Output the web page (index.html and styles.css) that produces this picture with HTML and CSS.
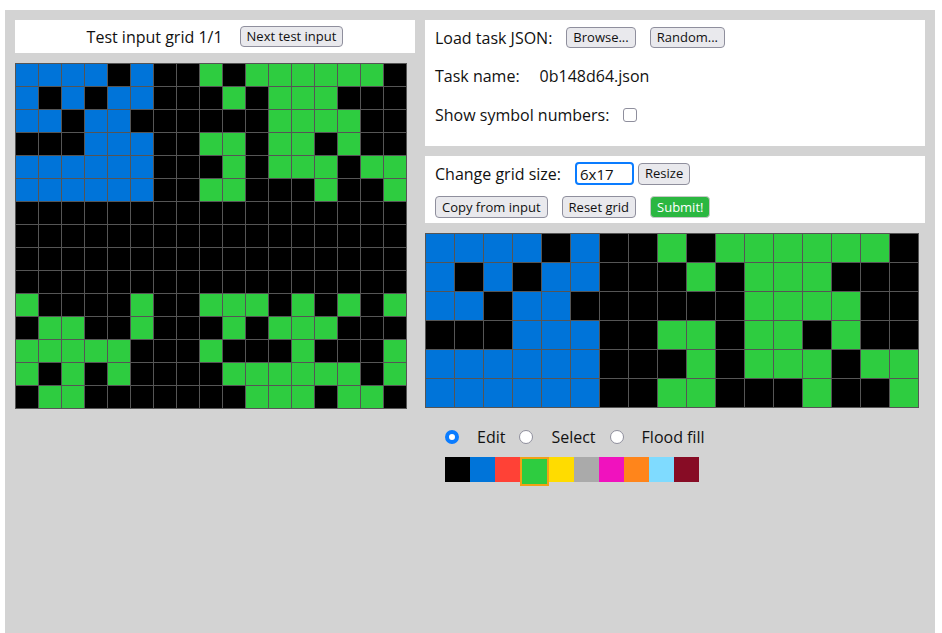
FILE: index.html
```html
<!DOCTYPE html>
<html>
<head>
<meta charset="utf-8">
<title>ARC testing interface</title>
<link rel="stylesheet" href="styles.css">
</head>
<body>
<div class="workspace">
  <div class="col-left">
    <div class="panel test-header">
      <span class="test-title">Test input grid 1/1</span>
      <button class="btn btn-next">Next test input</button>
    </div>
    <div class="grid grid-in">
      <i class="b"></i><i class="b"></i><i class="b"></i><i class="b"></i><i class="k"></i><i class="b"></i><i class="k"></i><i class="k"></i><i class="g"></i><i class="k"></i><i class="g"></i><i class="g"></i><i class="g"></i><i class="g"></i><i class="g"></i><i class="g"></i><i class="k"></i>
      <i class="b"></i><i class="k"></i><i class="b"></i><i class="k"></i><i class="b"></i><i class="b"></i><i class="k"></i><i class="k"></i><i class="k"></i><i class="g"></i><i class="k"></i><i class="g"></i><i class="g"></i><i class="g"></i><i class="k"></i><i class="k"></i><i class="k"></i>
      <i class="b"></i><i class="b"></i><i class="k"></i><i class="b"></i><i class="b"></i><i class="k"></i><i class="k"></i><i class="k"></i><i class="k"></i><i class="k"></i><i class="k"></i><i class="g"></i><i class="g"></i><i class="g"></i><i class="g"></i><i class="k"></i><i class="k"></i>
      <i class="k"></i><i class="k"></i><i class="k"></i><i class="b"></i><i class="b"></i><i class="b"></i><i class="k"></i><i class="k"></i><i class="g"></i><i class="g"></i><i class="k"></i><i class="g"></i><i class="g"></i><i class="k"></i><i class="g"></i><i class="k"></i><i class="k"></i>
      <i class="b"></i><i class="b"></i><i class="b"></i><i class="b"></i><i class="b"></i><i class="b"></i><i class="k"></i><i class="k"></i><i class="k"></i><i class="g"></i><i class="k"></i><i class="g"></i><i class="g"></i><i class="g"></i><i class="k"></i><i class="g"></i><i class="g"></i>
      <i class="b"></i><i class="b"></i><i class="b"></i><i class="b"></i><i class="b"></i><i class="b"></i><i class="k"></i><i class="k"></i><i class="g"></i><i class="g"></i><i class="k"></i><i class="k"></i><i class="k"></i><i class="g"></i><i class="k"></i><i class="k"></i><i class="g"></i>
      <i class="k"></i><i class="k"></i><i class="k"></i><i class="k"></i><i class="k"></i><i class="k"></i><i class="k"></i><i class="k"></i><i class="k"></i><i class="k"></i><i class="k"></i><i class="k"></i><i class="k"></i><i class="k"></i><i class="k"></i><i class="k"></i><i class="k"></i>
      <i class="k"></i><i class="k"></i><i class="k"></i><i class="k"></i><i class="k"></i><i class="k"></i><i class="k"></i><i class="k"></i><i class="k"></i><i class="k"></i><i class="k"></i><i class="k"></i><i class="k"></i><i class="k"></i><i class="k"></i><i class="k"></i><i class="k"></i>
      <i class="k"></i><i class="k"></i><i class="k"></i><i class="k"></i><i class="k"></i><i class="k"></i><i class="k"></i><i class="k"></i><i class="k"></i><i class="k"></i><i class="k"></i><i class="k"></i><i class="k"></i><i class="k"></i><i class="k"></i><i class="k"></i><i class="k"></i>
      <i class="k"></i><i class="k"></i><i class="k"></i><i class="k"></i><i class="k"></i><i class="k"></i><i class="k"></i><i class="k"></i><i class="k"></i><i class="k"></i><i class="k"></i><i class="k"></i><i class="k"></i><i class="k"></i><i class="k"></i><i class="k"></i><i class="k"></i>
      <i class="g"></i><i class="k"></i><i class="k"></i><i class="k"></i><i class="k"></i><i class="g"></i><i class="k"></i><i class="k"></i><i class="g"></i><i class="g"></i><i class="g"></i><i class="k"></i><i class="g"></i><i class="k"></i><i class="g"></i><i class="k"></i><i class="g"></i>
      <i class="k"></i><i class="g"></i><i class="g"></i><i class="k"></i><i class="k"></i><i class="g"></i><i class="k"></i><i class="k"></i><i class="k"></i><i class="g"></i><i class="k"></i><i class="g"></i><i class="g"></i><i class="g"></i><i class="k"></i><i class="k"></i><i class="k"></i>
      <i class="g"></i><i class="g"></i><i class="g"></i><i class="g"></i><i class="g"></i><i class="k"></i><i class="k"></i><i class="k"></i><i class="g"></i><i class="k"></i><i class="k"></i><i class="k"></i><i class="g"></i><i class="k"></i><i class="k"></i><i class="k"></i><i class="g"></i>
      <i class="g"></i><i class="k"></i><i class="g"></i><i class="k"></i><i class="g"></i><i class="k"></i><i class="k"></i><i class="k"></i><i class="k"></i><i class="g"></i><i class="g"></i><i class="g"></i><i class="g"></i><i class="g"></i><i class="g"></i><i class="k"></i><i class="g"></i>
      <i class="k"></i><i class="g"></i><i class="g"></i><i class="k"></i><i class="k"></i><i class="k"></i><i class="k"></i><i class="k"></i><i class="k"></i><i class="k"></i><i class="g"></i><i class="g"></i><i class="g"></i><i class="k"></i><i class="g"></i><i class="g"></i><i class="k"></i>
    </div>
  </div>

  <div class="col-right">
    <div class="panel load-panel">
      <div class="row row-load">
        <span class="label">Load task JSON:</span>
        <button class="btn btn-small">Browse...</button>
        <button class="btn btn-small">Random...</button>
      </div>
      <div class="row row-name">
        <span class="label">Task name:</span>
        <span class="task-name">0b148d64.json</span>
      </div>
      <div class="row row-symbols">
        <span class="label">Show symbol numbers:</span>
        <span class="checkbox"></span>
      </div>
    </div>

    <div class="panel edit-panel">
      <div class="row row-size">
        <span class="label">Change grid size:</span>
        <input class="size-input" type="text" value="6x17">
        <button class="btn btn-mid btn-resize">Resize</button>
      </div>
      <div class="row row-actions">
        <button class="btn btn-mid">Copy from input</button>
        <button class="btn btn-mid">Reset grid</button>
        <button class="btn btn-mid btn-submit">Submit!</button>
      </div>
    </div>

    <div class="grid grid-out">
      <i class="b"></i><i class="b"></i><i class="b"></i><i class="b"></i><i class="k"></i><i class="b"></i><i class="k"></i><i class="k"></i><i class="g"></i><i class="k"></i><i class="g"></i><i class="g"></i><i class="g"></i><i class="g"></i><i class="g"></i><i class="g"></i><i class="k"></i>
      <i class="b"></i><i class="k"></i><i class="b"></i><i class="k"></i><i class="b"></i><i class="b"></i><i class="k"></i><i class="k"></i><i class="k"></i><i class="g"></i><i class="k"></i><i class="g"></i><i class="g"></i><i class="g"></i><i class="k"></i><i class="k"></i><i class="k"></i>
      <i class="b"></i><i class="b"></i><i class="k"></i><i class="b"></i><i class="b"></i><i class="k"></i><i class="k"></i><i class="k"></i><i class="k"></i><i class="k"></i><i class="k"></i><i class="g"></i><i class="g"></i><i class="g"></i><i class="g"></i><i class="k"></i><i class="k"></i>
      <i class="k"></i><i class="k"></i><i class="k"></i><i class="b"></i><i class="b"></i><i class="b"></i><i class="k"></i><i class="k"></i><i class="g"></i><i class="g"></i><i class="k"></i><i class="g"></i><i class="g"></i><i class="k"></i><i class="g"></i><i class="k"></i><i class="k"></i>
      <i class="b"></i><i class="b"></i><i class="b"></i><i class="b"></i><i class="b"></i><i class="b"></i><i class="k"></i><i class="k"></i><i class="k"></i><i class="g"></i><i class="k"></i><i class="g"></i><i class="g"></i><i class="g"></i><i class="k"></i><i class="g"></i><i class="g"></i>
      <i class="b"></i><i class="b"></i><i class="b"></i><i class="b"></i><i class="b"></i><i class="b"></i><i class="k"></i><i class="k"></i><i class="g"></i><i class="g"></i><i class="k"></i><i class="k"></i><i class="k"></i><i class="g"></i><i class="k"></i><i class="k"></i><i class="g"></i>
    </div>

    <div class="tools">
      <span class="radio on"></span><span class="tool-label">Edit</span>
      <span class="radio"></span><span class="tool-label">Select</span>
      <span class="radio"></span><span class="tool-label">Flood fill</span>
    </div>

    <div class="palette">
      <span class="sw s0"></span>
      <span class="sw s1"></span>
      <span class="sw s2"></span>
      <span class="sw s3 selected"></span>
      <span class="sw s4"></span>
      <span class="sw s5"></span>
      <span class="sw s6"></span>
      <span class="sw s7"></span>
      <span class="sw s8"></span>
      <span class="sw s9"></span>
    </div>
  </div>
</div>
</body>
</html>
```

FILE: styles.css
```css
* { box-sizing: border-box; }

html, body {
  margin: 0;
  background: #ffffff;
}

body {
  font-family: "Open Sans", "Noto Sans", sans-serif;
  font-size: 16px;
  color: #111111;
}

.workspace {
  margin: 10px 7px 0 5px;
  padding: 10px;
  min-height: 623px;
  background: #d3d3d3;
  display: flex;
  gap: 10px;
  align-items: flex-start;
}

.col-left {
  width: 400px;
  display: flex;
  flex-direction: column;
  gap: 10px;
}

.col-right {
  width: 500px;
  display: flex;
  flex-direction: column;
}

.panel {
  background: #ffffff;
}

/* ---------- buttons ---------- */
.btn {
  font-family: "Open Sans", "Noto Sans", sans-serif;
  color: #111111;
  background: #e9e9ed;
  border: 1px solid #8f8f9d;
  border-radius: 4px;
  padding: 0 6px;
  margin: 0;
  line-height: 1;
}

.btn-next {
  font-size: 13px;
  height: 21px;
}

.btn-small {
  font-size: 13px;
  height: 21px;
}

.btn-mid {
  font-size: 13px;
  height: 22px;
}

.btn-submit {
  background: #2bb741;
  color: #ffffff;
  border-color: #c9c9c9;
}

/* ---------- left column ---------- */
.test-header {
  height: 33px;
  display: flex;
  align-items: center;
  justify-content: center;
  gap: 17px;
}

.test-title {
  font-size: 16px;
}

/* ---------- grids ---------- */
.grid {
  display: grid;
  gap: 1px;
  padding: 1px;
  background: #555555;
  width: max-content;
}

.grid-in {
  grid-template-columns: repeat(17, 22px);
  grid-auto-rows: 22px;
}

.grid-out {
  margin-top: 10px;
  grid-template-columns: repeat(17, 28px);
  grid-auto-rows: 28px;
}

.grid i { display: block; }
.grid .k { background: #000000; }
.grid .b { background: #0074d9; }
.grid .g { background: #2ecc40; }

/* ---------- right panels ---------- */
.row {
  display: flex;
  align-items: center;
}

.load-panel {
  padding: 7px 10px 20px;
  display: flex;
  flex-direction: column;
  gap: 17px;
}

.row-load { height: 21px; gap: 14px; }
.row-name { height: 22px; gap: 20px; }
.row-symbols { height: 22px; gap: 14px; }

.checkbox {
  width: 14px;
  height: 14px;
  border: 1px solid #8f8f9d;
  border-radius: 3px;
  background: #ffffff;
}

.edit-panel {
  margin-top: 10px;
  padding: 6px 10px 5px;
  display: flex;
  flex-direction: column;
  gap: 11px;
}

.row-size { height: 23px; }
.row-size .label { margin-right: 14px; }

.size-input {
  width: 59px;
  height: 23px;
  border: 2px solid #0a7cff;
  border-radius: 4px;
  padding: 0 3px;
  margin: 0;
  font-family: "Open Sans", "Noto Sans", sans-serif;
  font-size: 15px;
  color: #111111;
  outline: none;
}

.btn-resize { margin-left: 4px; }

.row-actions { height: 22px; gap: 14px; }

/* ---------- tools ---------- */
.tools {
  margin-top: 22px;
  padding-left: 20px;
  display: flex;
  align-items: center;
  height: 14px;
}

.radio {
  width: 14px;
  height: 14px;
  border-radius: 50%;
  border: 1px solid #8f8f9d;
  background: #ffffff;
  margin-left: 14px;
}

.radio:first-child { margin-left: 0; }

.radio.on {
  border: 4px solid #0a7cff;
}

.tool-label {
  margin-left: 18px;
}

.palette {
  margin-top: 13px;
  padding-left: 20px;
  display: flex;
  align-items: flex-start;
}

.sw {
  width: 25px;
  height: 25px;
}

.sw.selected {
  width: 29px;
  height: 29px;
  border: 2px solid #f2a116;
}

.s0 { background: #000000; }
.s1 { background: #0074d9; }
.s2 { background: #ff4136; }
.s3 { background: #2ecc40; }
.s4 { background: #ffdc00; }
.s5 { background: #aaaaaa; }
.s6 { background: #f012be; }
.s7 { background: #ff851b; }
.s8 { background: #7fdbff; }
.s9 { background: #870c25; }
```
